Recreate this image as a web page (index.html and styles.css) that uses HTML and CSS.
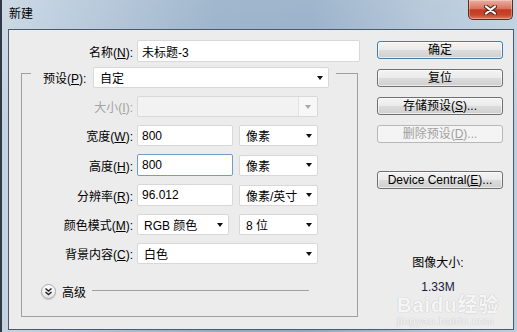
FILE: index.html
```html
<!DOCTYPE html>
<html lang="zh-CN">
<head>
  <meta charset="UTF-8">
  <title>新建</title>
  <link rel="stylesheet" href="styles.css">
</head>
<body>
  <div class="window">
    <div class="titlebar">
      <span class="title">新建</span>
      <button class="close-btn">
        <svg width="13" height="10" viewBox="0 0 13 10">
          <path d="M2 1.5 L11 8.5 M11 1.5 L2 8.5" stroke="#5b2b22" stroke-width="4.2" stroke-linecap="round"/>
          <path d="M2 1.5 L11 8.5 M11 1.5 L2 8.5" stroke="#fff" stroke-width="2.2" stroke-linecap="round"/>
        </svg>
      </button>
    </div>

    <div class="client">
      <div class="form-col">
        <div class="row name-row">
          <span class="lbl">名称(<u>N</u>):</span>
          <div class="field name-field">未标题-3</div>
        </div>

        <fieldset class="group">
          <legend class="group-head">
            <span class="head-lbl">预设(<u>P</u>):</span>
            <div class="select preset-select">自定<i class="arrow"></i></div>
          </legend>

          <div class="rows">
            <div class="row">
              <span class="lbl disabled">大小(<u>I</u>):</span>
              <div class="select wide-select off"><span class="drop"><i class="arrow"></i></span></div>
            </div>
            <div class="row">
              <span class="lbl">宽度(<u>W</u>):</span>
              <div class="field num-field">800</div>
              <div class="select unit-select">像素<i class="arrow"></i></div>
            </div>
            <div class="row tall">
              <span class="lbl">高度(<u>H</u>):</span>
              <div class="field num-field focus">800</div>
              <div class="select unit-select">像素<i class="arrow"></i></div>
            </div>
            <div class="row tall">
              <span class="lbl">分辨率(<u>R</u>):</span>
              <div class="field num-field">96.012</div>
              <div class="select unit-select">像素/英寸<i class="arrow"></i></div>
            </div>
            <div class="row">
              <span class="lbl">颜色模式(<u>M</u>):</span>
              <div class="select mode-select">RGB 颜色<i class="arrow"></i></div>
              <div class="select unit-select bits">8 位<i class="arrow"></i></div>
            </div>
            <div class="row">
              <span class="lbl">背景内容(<u>C</u>):</span>
              <div class="select wide-select">白色<i class="arrow"></i></div>
            </div>
          </div>

          <div class="advanced">
            <span class="adv-btn">
              <svg width="9" height="9" viewBox="0 0 9 9">
                <path d="M1.5 1.5 L4.5 4 L7.5 1.5 M1.5 5 L4.5 7.5 L7.5 5" fill="none" stroke="#222" stroke-width="1.4"/>
              </svg>
            </span>
            <span class="adv-lbl">高级</span>
            <span class="adv-line"></span>
          </div>
        </fieldset>
      </div>

      <div class="side-col">
        <button class="btn default">确定</button>
        <button class="btn">复位</button>
        <button class="btn">存储预设(<u>S</u>)...</button>
        <button class="btn" disabled>删除预设(<u>D</u>)...</button>
        <button class="btn device">Device Central(<u>E</u>)...</button>

        <div class="image-size">
          <div class="is-title">图像大小:</div>
          <div class="is-value">1.33M</div>
        </div>
      </div>

      <div class="watermark">
        <div class="wm-logo">Baidu经验</div>
        <div class="wm-url">jingyan.baidu.com</div>
      </div>
    </div>
  </div>
</body>
</html>
```

FILE: styles.css
```css
* { box-sizing: border-box; }

body {
  margin: 0;
  font-family: "Liberation Sans", "Noto Sans CJK SC", sans-serif;
  font-size: 12px;
  color: #000;
}

u { text-decoration: underline; text-underline-offset: 1px; }

.window {
  width: 517px;
  height: 332px;
  display: flex;
  flex-direction: column;
  padding: 0 3px 2px 6px;
  border-left: 2px solid #2f3a45;
  background:
    linear-gradient(180deg, rgba(255,255,255,0.15), rgba(255,255,255,0) 40%),
    linear-gradient(90deg, #c4d3e1 0%, #aec2d6 18%, #91abc5 42%, #8fa9c4 60%, #adc1d5 82%, #bccddd 100%);
}

/* title bar */
.titlebar {
  height: 29px;
  display: flex;
  justify-content: space-between;
  align-items: flex-start;
}

.title {
  margin: 7px 0 0 1px;
  line-height: 14px;
  font-size: 12px;
}

.close-btn {
  width: 45px;
  height: 20px;
  margin-right: 1px;
  padding: 0;
  display: flex;
  align-items: center;
  justify-content: center;
  border: 1px solid #5e2a20;
  border-top: none;
  border-radius: 0 0 5px 5px;
  background: linear-gradient(#eab0a2, #d9735e 45%, #c23a20 52%, #c9452a 78%, #dd7a5e);
  box-shadow: inset 0 0 0 1px rgba(255,255,255,0.3);
}

/* client area */
.client {
  position: relative;
  flex: 1;
  display: flex;
  background: #ececec;
  border: 1px solid #4a5b6d;
}

.form-col {
  width: 351px;
  display: flex;
  flex-direction: column;
}

.row {
  display: flex;
  align-items: center;
  height: 21px;
}

.row.tall { height: 22px; }

.lbl {
  width: 111px;
  margin-right: 4px;
  text-align: right;
  white-space: nowrap;
}

.lbl.disabled { color: #a3a3a3; }

.name-row {
  margin-top: 10px;
  height: 22px;
}

.name-row .lbl { width: 124px; }

.field {
  height: 100%;
  padding: 0 4px;
  display: flex;
  align-items: center;
  background: #fff;
  border: 1px solid #d8d8d8;
  border-radius: 2px;
}

.field.focus { border-color: #6f9dcf; }

.name-field { width: 223px; }
.num-field { width: 96px; }

.select {
  height: 21px;
  padding: 0 5px 0 6px;
  display: flex;
  align-items: center;
  justify-content: space-between;
  background: #fff;
  border: 1px solid #d8d8d8;
  border-radius: 2px;
  white-space: nowrap;
}

.arrow {
  width: 0;
  height: 0;
  border-left: 3.5px solid transparent;
  border-right: 3.5px solid transparent;
  border-top: 4px solid #111;
}

.select.off {
  padding: 0;
  justify-content: flex-end;
  background: #f2f2f2;
}

.select.off .drop {
  width: 19px;
  height: 100%;
  display: flex;
  align-items: center;
  justify-content: center;
  background: #f7f7f7;
  border-left: 1px solid #e2e2e2;
}

.select.off .arrow { border-top-color: #a8a8a8; }

.preset-select { width: 236px; }
.wide-select { width: 181px; }
.unit-select { width: 79px; margin-left: 6px; }
.mode-select { width: 92px; }
.unit-select.bits { margin-left: 10px; }

/* group box */
.group {
  margin: -3px 0 0 12px;
  width: 337px;
  padding: 0 0 17px;
  border: 1px solid #a0a0a0;
  border-radius: 0;
}

.group-head {
  display: flex;
  align-items: center;
  margin-left: 9px;
  padding: 8px 7px 0 12px;
}

.head-lbl {
  width: 44px;
  margin-right: 6px;
  white-space: nowrap;
}

.rows {
  display: flex;
  flex-direction: column;
  gap: 8px;
  padding-top: 8px;
}

.advanced {
  display: flex;
  align-items: center;
  height: 16px;
  margin-top: 19px;
  padding-left: 19px;
}

.adv-btn {
  width: 15px;
  height: 15px;
  display: flex;
  align-items: center;
  justify-content: center;
  border: 1px solid #a9a9a9;
  border-radius: 50%;
  background: linear-gradient(#ffffff, #e4e4e4);
  box-shadow: 0 1px 1px rgba(0,0,0,0.15);
}

.adv-lbl { margin-left: 6px; }

.adv-line {
  width: 217px;
  height: 1px;
  margin: -2px 0 0 6px;
  background: #a0a0a0;
}

/* buttons column */
.side-col {
  width: 126px;
  margin-left: 17px;
  padding-top: 11px;
  display: flex;
  flex-direction: column;
  gap: 10px;
}

.btn {
  height: 18px;
  padding: 0;
  font: inherit;
  color: #000;
  border: 1px solid #707070;
  border-radius: 3px;
  background: linear-gradient(#f3f3f3, #ebebeb 48%, #dcdcdc 52%, #cfcfcf);
  box-shadow: inset 0 0 0 1px rgba(255,255,255,0.6);
  line-height: 15px;
}

.btn.default { border-color: #3c7fb1; }

.btn:disabled {
  color: #a0a0a0;
  border-color: #b8b8b8;
  background: #f4f4f4;
  box-shadow: none;
}

.btn.device { margin-top: 18px; }

.image-size {
  margin-top: 56px;
  padding-right: 4px;
  text-align: center;
}

.is-title { line-height: 16px; }

.is-value {
  margin-top: 9px;
  line-height: 14px;
  color: #1a1a3a;
}

/* watermark overlay */
.watermark {
  position: absolute;
  left: 388px;
  top: 265px;
  color: rgba(255,255,255,0.85);
  text-shadow: 0 0 1px #c4c4c4, 0 0 1px #c4c4c4;
  pointer-events: none;
}

.wm-logo {
  font-size: 20px;
  font-weight: bold;
  line-height: 20px;
  letter-spacing: 1px;
}

.wm-url {
  font-size: 11px;
  line-height: 12px;
  letter-spacing: 0.5px;
}
```
